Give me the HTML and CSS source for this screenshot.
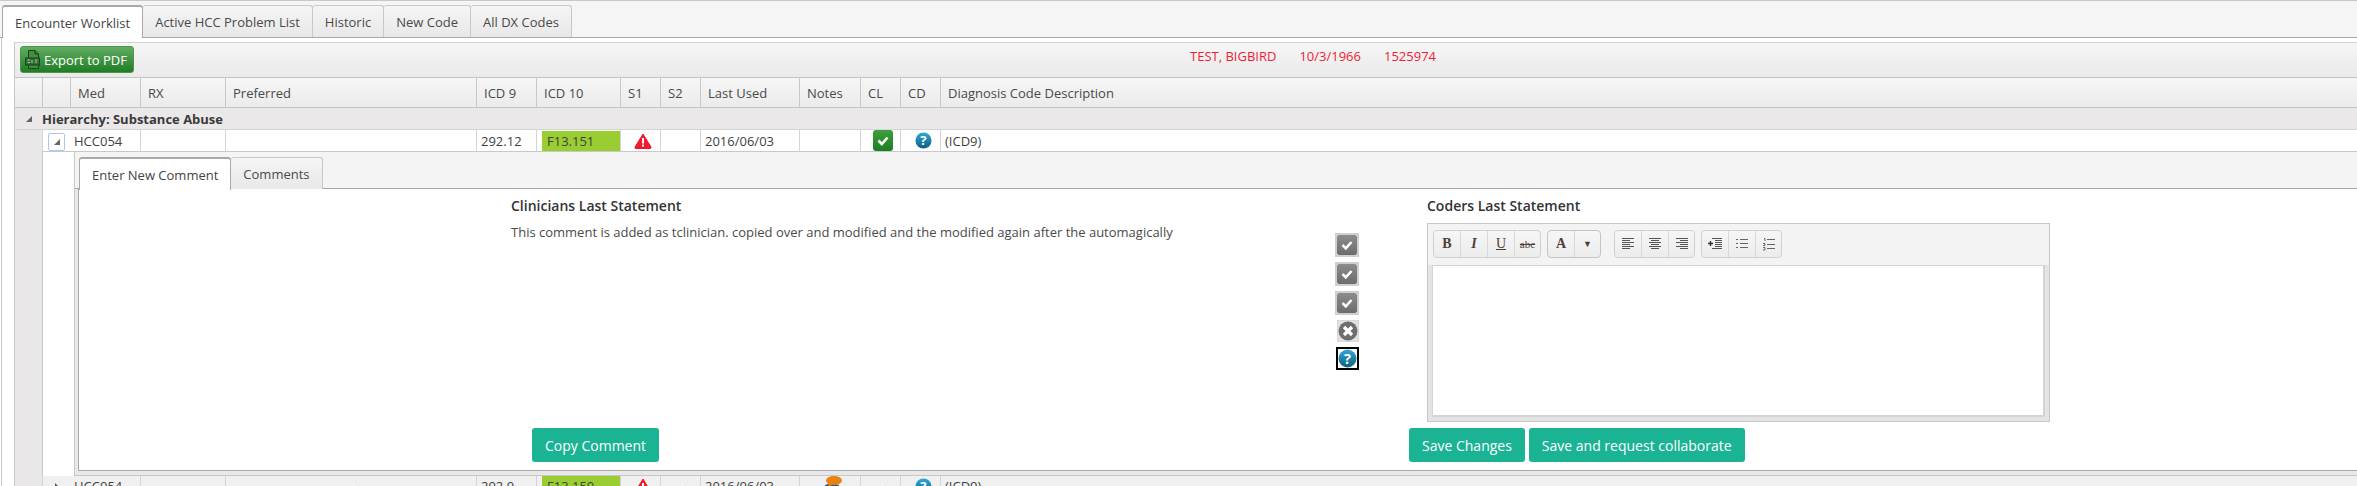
FILE: index.html
```html
<!DOCTYPE html>
<html lang="en">
<head>
    <meta charset="UTF-8">
    <title>Encounter Worklist</title>
    <link rel="stylesheet" href="styles.css">
</head>
<body>
    <svg class="defs" width="0" height="0">
        <defs>
            <linearGradient id="gBlue" x1="0" y1="0" x2="0" y2="1"><stop offset="0" stop-color="#2fa8dc"/><stop offset="1" stop-color="#0d5f7e"/></linearGradient>
            <linearGradient id="gGreen" x1="0" y1="0" x2="0" y2="1"><stop offset="0" stop-color="#3f9f3a"/><stop offset="1" stop-color="#1c7d24"/></linearGradient>
            <linearGradient id="gGrey" x1="0" y1="0" x2="0" y2="1"><stop offset="0" stop-color="#8c8c8c"/><stop offset="1" stop-color="#6c6c6c"/></linearGradient>
            <symbol id="warn" viewBox="0 0 18 16">
                <path d="M9 1 L17 14 Q17.4 15.5 16 15.5 L2 15.5 Q.6 15.5 1 14 Z" fill="#ee1c2e" stroke="#ee1c2e" stroke-linejoin="round"/>
                <rect x="8" y="5" width="2" height="5.5" fill="#fff"/>
                <rect x="8" y="11.6" width="2" height="2" fill="#fff"/>
            </symbol>
            <symbol id="okGreen" viewBox="0 0 20 21">
                <rect x="0" y="0" width="20" height="21" rx="3" fill="url(#gGreen)"/>
                <path d="M5.5 10.5 L8.8 14 L14.5 7.5" fill="none" stroke="#fff" stroke-width="2.6"/>
            </symbol>
            <symbol id="okGrey" viewBox="0 0 20 20">
                <rect x="0" y="0" width="20" height="20" rx="2" fill="url(#gGrey)"/>
                <path d="M5.5 10 L8.8 13.4 L14.5 7" fill="none" stroke="#fff" stroke-width="2.6"/>
            </symbol>
            <symbol id="help" viewBox="0 0 18 18">
                <circle cx="9" cy="9" r="8.5" fill="url(#gBlue)"/>
                <text x="9" y="14" text-anchor="middle" class="help-mark">?</text>
            </symbol>
            <symbol id="closeGrey" viewBox="0 0 20 20">
                <circle cx="10" cy="10" r="9.5" fill="#6f6f6f"/>
                <path d="M6 6 L14 14 M14 6 L6 14" stroke="#fff" stroke-width="3.2"/>
            </symbol>
            <symbol id="person" viewBox="0 0 20 20">
                <ellipse cx="9" cy="13" rx="8.5" ry="6" fill="#1f5aa0"/>
                <ellipse cx="11" cy="4.5" rx="8" ry="4.5" fill="#e8820e"/>
                <path d="M6 7 L5 11 L10 8.5 Z" fill="#e8820e"/>
            </symbol>
            <symbol id="pdf" viewBox="0 0 15 19">
                <path d="M3.5 .5 H10 L13.5 4 V18.5 H3.5 Z" fill="#3f8f3f" stroke="#1f3f1f"/>
                <path d="M10 .5 V4 H13.5" fill="none" stroke="#1f3f1f"/>
                <rect x=".5" y="8" width="14" height="7" fill="#2f6f2f" stroke="#1f3f1f"/>
                <path d="M2.5 10 H5 M7 10 V13 M10 10 H12.5 M2.5 12.5 H5 M10 12 H12" stroke="#a8c8a8"/>
            </symbol>
        </defs>
    </svg>

    <div class="tabstrip">
        <div class="tab active">Encounter Worklist</div>
        <div class="tab">Active HCC Problem List</div>
        <div class="tab">Historic</div>
        <div class="tab">New Code</div>
        <div class="tab">All DX Codes</div>
    </div>

    <div class="page">
        <div class="grid">
            <div class="toolbar">
                <button class="btn-export"><svg width="15" height="19"><use href="#pdf"/></svg>Export to PDF</button>
                <div class="patient">
                    <span>TEST, BIGBIRD</span>
                    <span>10/3/1966</span>
                    <span>1525974</span>
                </div>
            </div>
            <table class="worklist">
                <colgroup>
                    <col class="c-a"><col class="c-b"><col class="c-med"><col class="c-rx"><col class="c-pref"><col class="c-icd9"><col class="c-icd10"><col class="c-s"><col class="c-s"><col class="c-used"><col class="c-notes"><col class="c-s"><col class="c-s"><col>
                </colgroup>
                <thead>
                    <tr>
                        <th></th><th></th><th>Med</th><th>RX</th><th>Preferred</th><th>ICD 9</th><th>ICD 10</th><th>S1</th><th>S2</th><th>Last Used</th><th>Notes</th><th>CL</th><th>CD</th><th>Diagnosis Code Description</th>
                    </tr>
                </thead>
                <tbody>
                    <tr class="group">
                        <td><span class="arrow-open"></span></td>
                        <td colspan="13" class="group-title">Hierarchy: Substance Abuse</td>
                    </tr>
                    <tr class="row">
                        <td class="indent"></td>
                        <td colspan="2"><div class="med"><span class="expander"><span class="arrow-open"></span></span>HCC054</div></td>
                        <td></td>
                        <td></td>
                        <td>292.12</td>
                        <td><div class="code">F13.151</div></td>
                        <td class="icon"><svg width="18" height="16"><use href="#warn"/></svg></td>
                        <td></td>
                        <td>2016/06/03</td>
                        <td></td>
                        <td class="icon"><svg width="20" height="21"><use href="#okGreen"/></svg></td>
                        <td class="icon"><svg width="17" height="17"><use href="#help"/></svg></td>
                        <td>(ICD9)</td>
                    </tr>
                    <tr class="detail">
                        <td class="indent"></td>
                        <td colspan="13" class="detail-cell">
                            <div class="panel">
                                <div class="subtabs">
                                    <div class="tab active">Enter New Comment</div>
                                    <div class="tab">Comments</div>
                                </div>
                                <div class="subbody">
                                    <div class="col-clinician">
                                        <h4>Clinicians Last Statement</h4>
                                        <p>This comment is added as tclinician. copied over and modified and the modified again after the automagically</p>
                                        <div class="actions copy"><button class="btn">Copy Comment</button></div>
                                    </div>
                                    <div class="col-status">
                                        <span class="status"><svg width="20" height="20"><use href="#okGrey"/></svg></span>
                                        <span class="status"><svg width="20" height="20"><use href="#okGrey"/></svg></span>
                                        <span class="status"><svg width="20" height="20"><use href="#okGrey"/></svg></span>
                                        <span class="status small"><svg width="20" height="20"><use href="#closeGrey"/></svg></span>
                                        <span class="status small focused"><svg width="19" height="19"><use href="#help"/></svg></span>
                                    </div>
                                    <div class="col-coder">
                                        <h4>Coders Last Statement</h4>
                                        <div class="editor">
                                            <div class="editor-tools">
                                                <div class="tool-group">
                                                    <span class="tool t-b">B</span>
                                                    <span class="tool t-i">I</span>
                                                    <span class="tool t-u">U</span>
                                                    <span class="tool t-s">abc</span>
                                                </div>
                                                <div class="tool-group color">
                                                    <span class="tool t-b">A</span>
                                                    <span class="tool t-arrow">&#9660;</span>
                                                </div>
                                                <div class="tool-group">
                                                    <span class="tool"><svg width="14" height="12"><path d="M1 .5H13M1 2.5H9M1 4.5H13M1 6.5H9M1 8.5H13M1 10.5H9" stroke="#555"/></svg></span>
                                                    <span class="tool"><svg width="14" height="12"><path d="M1 .5H13M3 2.5H11M1 4.5H13M3 6.5H11M1 8.5H13M3 10.5H11" stroke="#555"/></svg></span>
                                                    <span class="tool"><svg width="14" height="12"><path d="M1 .5H13M5 2.5H13M1 4.5H13M5 6.5H13M1 8.5H13M5 10.5H13" stroke="#555"/></svg></span>
                                                </div>
                                                <div class="tool-group">
                                                    <span class="tool"><svg width="15" height="12"><path d="M4 .5H14M7 2.5H14M7 4.5H14M7 6.5H14M7 8.5H14M4 10.5H14" stroke="#555"/><path d="M0 5.5H5M2.5 3V8" stroke="#333" stroke-width="1.4"/></svg></span>
                                                    <span class="tool"><svg width="12" height="12"><path d="M0 1.5H2M4 1.5H12M0 5.5H2M4 5.5H12M0 9.5H2M4 9.5H12" stroke="#666"/></svg></span>
                                                    <span class="tool"><svg width="12" height="14"><path d="M1 1.5H2V4M0 6.5H2V8.5H0M0 10.5H2V13H0M4 2.5H12M4 7.5H12M4 11.5H12" fill="none" stroke="#666"/></svg></span>
                                                </div>
                                            </div>
                                            <div class="editor-body"></div>
                                        </div>
                                        <div class="actions save">
                                            <button class="btn">Save Changes</button>
                                            <button class="btn">Save and request collaborate</button>
                                        </div>
                                    </div>
                                </div>
                            </div>
                        </td>
                    </tr>
                    <tr class="row alt">
                        <td class="indent"></td>
                        <td colspan="2"><div class="med"><span class="expander plain"><span class="arrow-closed"></span></span>HCC054</div></td>
                        <td></td>
                        <td><span class="tick"></span></td>
                        <td>292.9</td>
                        <td><div class="code">F13.150</div></td>
                        <td class="icon"><svg width="18" height="16"><use href="#warn"/></svg></td>
                        <td><span class="tick"></span></td>
                        <td>2016/06/03</td>
                        <td class="icon"><svg width="20" height="20"><use href="#person"/></svg></td>
                        <td><span class="tick"></span></td>
                        <td class="icon"><svg width="17" height="17"><use href="#help"/></svg></td>
                        <td>(ICD9)</td>
                    </tr>
                </tbody>
            </table>
        </div>
    </div>
</body>
</html>
```

FILE: styles.css
```css
* {
    box-sizing: border-box;
}
html, body {
    height: 486px;
    margin: 0;
    overflow: hidden;
}
body {
    width: 2357px;
    font-family: "Open Sans", Arial, sans-serif;
    font-size: 13px;
    color: #3f3f3f;
    background: #fff;
}
.defs {
    display: block;
    height: 0;
}
.help-mark {
    font-family: "Open Sans", sans-serif;
    font-size: 14px;
    font-weight: 700;
    fill: #fff;
}

/* tabs */
.tabstrip {
    display: flex;
    height: 38px;
    padding: 4px 0 0 2px;
    background: #f5f5f5;
    border-top: 1px solid #c8c8c8;
    border-bottom: 1px solid #a8a8a8;
}
.subtabs {
    display: flex;
    height: 37px;
    padding: 5px 0 0 4px;
    background: #f4f4f4;
    border-bottom: 1px solid #a8a8a8;
    margin-left: -4px;
}
.tab {
    display: flex;
    align-items: center;
    height: 32px;
    padding: 0 12px;
    background: linear-gradient(#f5f5f5, #e8e8e8);
    border: 1px solid #c8c8c8;
    border-left: 0;
    border-bottom: 0;
    border-radius: 3px 3px 0 0;
    color: #4a4a4a;
}
.tab.active {
    height: 33px;
    background: #fff;
    border: 1px solid #a8a8a8;
    border-top-width: 2px;
    border-bottom: 0;
    color: #444;
    z-index: 1;
}

/* grid */
.page {
    padding: 4px 0 0 12px;
    margin-left: 1px;
    border-left: 1px solid #c8c8c8;
}
.grid {
    border-left: 1px solid #c8c8c8;
}
.toolbar {
    display: flex;
    align-items: flex-start;
    height: 35px;
    padding: 3px 0 0 5px;
    background: linear-gradient(#f6f6f6, #ebe9e9);
    border-top: 1px solid #d4d4d4;
}
.btn-export {
    display: flex;
    align-items: center;
    gap: 4px;
    width: 114px;
    height: 27px;
    padding: 0 0 0 4px;
    font: 13px "Open Sans", sans-serif;
    color: #fff;
    background: linear-gradient(#62ad62, #1f7d25);
    border: 1px solid #4c964c;
    border-radius: 3px;
}
.patient {
    display: flex;
    gap: 23px;
    margin-left: 1056px;
    line-height: 20px;
    color: #f01c34;
}
.worklist {
    width: 2342px;
    table-layout: fixed;
    border-collapse: separate;
    border-spacing: 0;
}
.c-a { width: 27px; }
.c-b { width: 28px; }
.c-med { width: 70px; }
.c-rx { width: 85px; }
.c-pref { width: 251px; }
.c-icd9 { width: 60px; }
.c-icd10 { width: 84px; }
.c-s { width: 40px; }
.c-used { width: 99px; }
.c-notes { width: 61px; }
.worklist th {
    height: 31px;
    padding: 0 0 0 7px;
    font-weight: 400;
    text-align: left;
    color: #4a4a4a;
    background: linear-gradient(#f6f6f6, #ebebeb);
    border-top: 1px solid #c4c4c4;
    border-bottom: 1px solid #c4c4c4;
    border-left: 1px solid #c8c8c8;
}
.worklist th:first-child {
    border-left: 0;
}
.group td {
    height: 22px;
    padding: 0;
    background: #eae8e8;
    border-bottom: 1px solid #d4d4d4;
}
.group td .arrow-open {
    margin-left: 11px;
}
.group-title {
    font-weight: 700;
    color: #3a3a3a;
}
.arrow-open {
    display: block;
    width: 0;
    height: 0;
    border-left: 6px solid transparent;
    border-bottom: 6px solid #666;
}
.arrow-closed {
    display: block;
    width: 0;
    height: 0;
    border-top: 4px solid transparent;
    border-bottom: 4px solid transparent;
    border-left: 4px solid #555;
}
.row td {
    height: 21px;
    padding: 0 0 0 4px;
    background: #fff;
    border-left: 1px solid #d4d4d4;
    border-bottom: 1px solid #c8c8c8;
}
.row.alt td {
    background: #f0f0f0;
}
.worklist td.indent {
    padding: 0;
    background: #e9e7e7;
    border-left: 0;
    border-bottom: 0;
}
.row td.icon {
    padding: 0 0 0 5px;
    text-align: center;
    line-height: 0;
}
.med {
    display: flex;
    align-items: center;
    height: 20px;
}
.expander {
    display: flex;
    align-items: center;
    justify-content: center;
    width: 17px;
    height: 18px;
    margin: 2px 9px 0 1px;
    background: #fff;
    border: 1px solid #a9c8f4;
    border-radius: 2px;
}
.expander.plain {
    background: none;
    border-color: transparent;
}
.row .code {
    height: 20px;
    margin-left: 1px;
    padding-left: 5px;
    line-height: 20px;
    background: #9acd32;
}
.tick {
    display: block;
    width: 1px;
    height: 4px;
    margin: 0 auto;
    background: #fff;
}
.detail-cell {
    padding: 0 0 0 31px;
    background: #fff;
    border-left: 1px solid #c8c8c8;
}

/* comment panel */
.panel {
    height: 324px;
    padding: 0 0 4px 4px;
    background: #e8e8e8;
    border-left: 1px solid #c8c8c8;
    border-bottom: 1px solid #c8c8c8;
}
.subbody {
    display: flex;
    height: 282px;
    padding: 8px 0 8px 432px;
    background: #fff;
    border-left: 1px solid #a8a8a8;
    border-bottom: 1px solid #a8a8a8;
    margin-left: -1px;
}
.subbody h4 {
    margin: 0 0 8px;
    font-size: 14px;
    font-weight: 600;
    line-height: 18px;
    color: #333;
}
.subbody p {
    margin: 0;
    line-height: 18px;
    color: #4a4a4a;
}
.col-clinician {
    display: flex;
    flex-direction: column;
    width: 824px;
}
.col-status {
    display: flex;
    flex-direction: column;
    align-items: flex-end;
    gap: 5px;
    width: 24px;
    margin-right: 68px;
    padding-top: 36px;
}
.status {
    display: block;
    line-height: 0;
    border: 2px solid #cfcfcf;
}
.status.small {
    background: #e2e2e2;
    border-width: 1px;
    border-color: #d8d8d8;
}
.status.focused {
    border: 2px solid #000;
    background: #fff;
}
.col-coder {
    display: flex;
    flex-direction: column;
    width: 623px;
}
.actions {
    display: flex;
    gap: 4px;
    margin-top: auto;
}
.actions.copy {
    margin-left: 21px;
}
.actions.save {
    margin-left: -18px;
}
.btn {
    height: 34px;
    padding: 0 13px;
    font: 14px "Open Sans", sans-serif;
    color: #fff;
    white-space: nowrap;
    background: #1ab394;
    border: 0;
    border-radius: 3px;
}

/* editor */
.editor {
    height: 199px;
    padding: 0 4px 5px;
    background: #e4e4e4;
    border: 1px solid #c8c8c8;
}
.editor-tools {
    display: flex;
    gap: 6px;
    height: 41px;
    margin: 0 -4px;
    padding: 6px 0 0 5px;
    background: #f3f3f3;
}
.tool-group {
    display: flex;
    height: 28px;
    background: linear-gradient(#f6f6f6, #ececec);
    border: 1px solid #d0d0d0;
    border-radius: 4px;
}
.tool-group.color {
    margin-right: 7px;
    border-color: #c4c4c4;
}
.tool {
    display: flex;
    align-items: center;
    justify-content: center;
    width: 27px;
    border-left: 1px solid #d8d8d8;
    font-family: "Liberation Serif", serif;
    font-size: 14px;
    color: #4d4038;
}
.tool:first-child {
    width: 26px;
    border-left: 0;
}
.tool:last-child {
    width: 26px;
}
.t-b {
    font-weight: 700;
}
.t-i {
    font-style: italic;
    font-weight: 700;
}
.t-u {
    text-decoration: underline;
}
.t-s {
    font-size: 11px;
    text-decoration: line-through;
}
.t-arrow {
    font-size: 9px;
}
.editor-body {
    height: 152px;
    background: #fff;
    border: 1px solid #d4d4d4;
    border-right-width: 2px;
    border-bottom-width: 2px;
}
```
